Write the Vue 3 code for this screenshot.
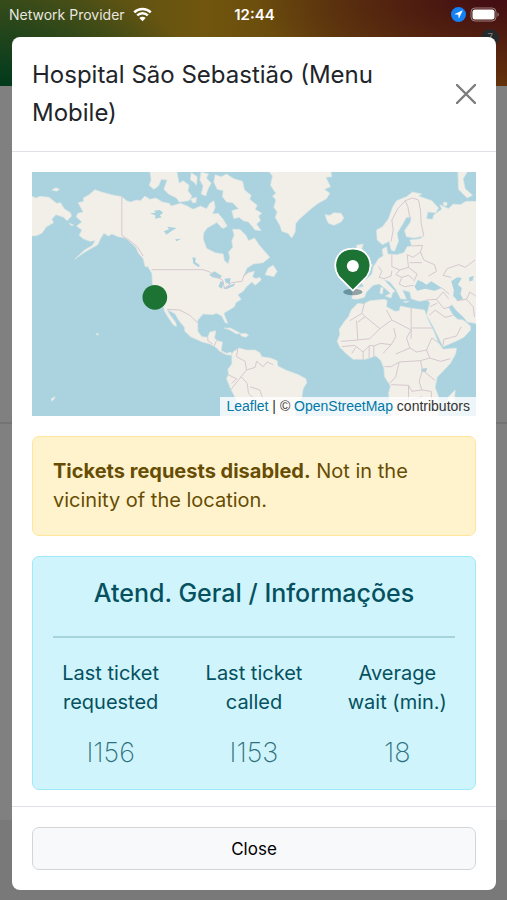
<template>
  <div class="screen">
    <div class="page-behind" aria-hidden="true">
      <div class="hero"></div>
      <div class="page-section"></div>
      <div class="page-footer"></div>
      <span class="badge">7</span>
    </div>

    <header class="status-bar">
      <div class="carrier">
        <span>Network Provider</span>
        <svg class="wifi" viewBox="0 0 20 15" aria-hidden="true">
          <path d="M1.3 5.2a12.5 12.5 0 0 1 17.4 0" />
          <path d="M4.4 8.5a8 8 0 0 1 11.2 0" />
          <path class="wifi-dot" d="M10 14.6 6.7 11.2a4.7 4.7 0 0 1 6.6 0z" />
        </svg>
      </div>
      <time class="clock">12:44</time>
      <div class="indicators">
        <svg class="location" viewBox="0 0 15 15" aria-hidden="true">
          <circle cx="7.5" cy="7.5" r="7.5" fill="#1481f5" />
          <path d="M11.8 3.2 3.2 7.2l4.1.6.5 4z" fill="#fff" />
        </svg>
        <svg class="battery" viewBox="0 0 30 15" aria-hidden="true">
          <rect x="1" y="1" width="25" height="13" rx="4" fill="none" stroke="#fff" stroke-opacity=".45" />
          <rect x="2.5" y="2.5" width="22" height="10" rx="2.5" fill="#fff" />
          <path d="M27.5 5.2q2.5 2.3 0 4.6z" fill="#fff" fill-opacity=".5" />
        </svg>
      </div>
    </header>

    <section class="modal" role="dialog" aria-modal="true" aria-labelledby="modal-title">
      <div class="modal-header">
        <h1 id="modal-title">{{ location }}</h1>
        <button class="btn-close" type="button" aria-label="Close dialog">
          <svg viewBox="0 0 20 20" aria-hidden="true"><path d="M1 1l18 18M19 1 1 19" /></svg>
        </button>
      </div>

      <div class="modal-body">
        <div class="map">
          <svg viewBox="5 6 1335 732" preserveAspectRatio="xMidYMid slice" aria-hidden="true">
            <g class="land">
              <path v-for="(d, i) in land" :key="i" :d="d" />
            </g>
            <g class="water">
              <path v-for="(d, i) in lakes" :key="i" :d="d" />
            </g>
            <g class="borders">
              <path v-for="(d, i) in borders" :key="i" :d="d" />
            </g>
            <circle cx="375" cy="382" r="37" fill="#1d7334" />
            <ellipse cx="969" cy="366" rx="29" ry="10" fill="#1b4550" fill-opacity=".45" />
            <path
              d="M969 362 927 320C905 286 918 236 969 236s64 50 42 84z"
              fill="#1d7334"
              stroke="#fff"
              stroke-width="5"
              stroke-linejoin="round"
            />
            <circle cx="969" cy="288" r="18" fill="#fff" />
          </svg>
          <div class="attribution">
            <a href="#leaflet">Leaflet</a> | © <a href="#openstreetmap">OpenStreetMap</a> contributors
          </div>
        </div>

        <div class="alert alert-warning" role="alert">
          <strong>Tickets requests disabled.</strong> Not in the vicinity of the location.
        </div>

        <div class="alert alert-info">
          <h2>Atend. Geral / Informações</h2>
          <hr />
          <dl class="stats">
            <div v-for="stat in stats" :key="stat.label" class="stat">
              <dt>{{ stat.label }}</dt>
              <dd>{{ stat.value }}</dd>
            </div>
          </dl>
        </div>
      </div>

      <div class="modal-footer">
        <button class="btn-light" type="button">Close</button>
      </div>
    </section>
  </div>
</template>

<script setup>
const location = "Hospital São Sebastião (Menu Mobile)";

const stats = [
  { label: "Last ticket requested", value: "I156" },
  { label: "Last ticket called", value: "I153" },
  { label: "Average wait (min.)", value: "18" },
];

const land = [
  // Eastern Siberia
  "M0 76 18 84 30 79 58 82 80 100 92 98 103 116 122 128 125 138 112 152 100 141 78 134 66 148 71 158 50 170 36 190 20 197 0 198Z",
  "M66 60 78 53 89 58 80 64Z",
  "M118 160 132 165 124 167Z",
  // North and Central America
  "M145 98 162 94 160 84 178 74 195 59 215 66 245 74 276 80 290 92 302 96 320 90 332 92 345 78 360 88 378 84 398 96 418 100 424 108 452 100 472 108 490 118 512 108 530 116 540 100 552 92 556 112 548 132 565 130 580 148 592 168 580 176 566 154 548 165 532 174 522 188 520 206 530 235 556 248 580 252 584 272 595 281 600 262 596 246 609 232 606 212 613 196 608 178 630 178 648 196 656 212 674 204 688 225 708 248 720 262 700 278 670 282 652 294 640 320 656 308 674 304 668 320 678 326 690 322 694 330 676 346 666 336 650 350 640 364 624 374 634 388 618 398 614 410 598 420 582 430 588 446 594 460 586 458 576 438 560 430 548 434 520 432 504 450 504 484 516 500 534 502 540 486 558 482 554 504 562 512 578 516 574 542 590 550 604 546 605 556 590 554 572 546 558 532 540 522 515 515 482 500 465 484 464 472 446 450 436 432 412 418 420 434 438 458 440 470 430 464 415 442 404 424 400 402 382 388 372 362 368 345 366 310 354 290 346 290 340 266 326 250 318 232 300 215 286 204 265 200 246 192 236 198 222 190 212 206 204 224 180 238 160 250 134 268 164 240 188 226 196 212 180 214 160 206 148 196 156 180 140 168 156 156 139 140 144 130 160 126Z",
  // Arctic archipelago
  "M360 0 364 30 358 46 372 58 386 48 394 28 412 30 402 58 416 72 440 84 448 96 478 92 486 78 474 62 478 46 460 32 448 40 440 0Z",
  "M484 8 502 20 500 46 492 36 482 30Z",
  "M514 6 536 12 530 24 544 40 534 58 528 78 514 72 520 48 510 30Z",
  "M482 86 500 82 498 98 488 98Z",
  "M556 14 574 20 590 12 612 26 638 34 644 60 664 76 660 88 682 106 676 118 696 130 686 138 692 152 680 162 694 182 676 180 656 156 640 152 628 142 612 146 606 122 626 116 608 98 590 96 578 80 580 62 562 58 552 36Z",
  "M560 156 572 150 586 164 576 174Z",
  "M715 294 730 286 742 304 732 320 706 314Z",
  // Greenland and Iceland
  "M714 0 728 18 722 46 738 70 728 78 738 90 732 112 742 126 736 142 750 166 756 184 774 190 786 204 796 186 798 160 810 146 826 132 842 118 862 102 890 86 900 70 884 58 902 50 894 34 888 22 906 20 902 0Z",
  "M886 134 900 136 912 128 934 130 942 144 934 156 912 166 896 160 890 148Z",
  // Caribbean
  "M583 474 602 474 632 490 620 492 600 480Z",
  "M632 491 648 490 656 496 648 502 634 498Z",
  // South America
  "M606 552 612 544 628 534 650 540 676 540 690 548 696 560 722 564 742 572 744 588 768 600 806 614 828 626 831 638 820 656 816 684 800 700 796 744 664 744 658 730 634 716 618 686 604 660 590 626 596 612 594 598 606 582Z",
  // Europe, western Asia and Arabia
  "M990 330 1010 328 1026 312 1030 292 1046 266 1060 258 1057 238 1070 230 1074 252 1100 254 1122 248 1132 230 1146 228 1140 210 1170 206 1182 198 1152 204 1130 200 1124 182 1142 156 1144 142 1130 142 1120 160 1102 190 1106 214 1094 244 1084 240 1078 214 1058 224 1042 210 1040 180 1058 170 1076 146 1088 112 1100 92 1130 80 1148 66 1176 72 1166 78 1206 92 1226 114 1218 128 1194 126 1190 146 1208 148 1212 134 1236 118 1230 104 1256 116 1270 102 1292 104 1308 94 1345 94 1345 462 1312 456 1300 440 1282 424 1266 404 1256 412 1270 436 1284 448 1300 450 1322 468 1322 480 1302 502 1282 512 1240 530 1224 498 1208 466 1190 436 1200 398 1190 390 1168 394 1144 386 1140 366 1118 360 1130 388 1112 386 1098 358 1080 336 1062 328 1078 346 1096 364 1088 368 1084 384 1066 378 1082 370 1064 354 1048 342 1030 346 1010 366 1004 382 980 388 966 386 970 354 1002 350Z",
  "M980 226 1000 222 996 236 1010 252 1012 266 1028 286 1018 300 986 304Z",
  "M1284 0 1316 0 1300 26 1306 56 1328 76 1312 84 1286 58Z",
  "M1242 96 1252 98 1250 108 1240 106Z",
  "M1053 352 1060 354 1058 372 1050 370Z",
  // Africa and Madagascar
  "M984 400 1000 402 1020 392 1064 388 1072 392 1070 410 1096 424 1108 422 1112 408 1140 414 1184 420 1194 448 1212 484 1226 518 1240 538 1280 534 1278 550 1262 580 1222 622 1216 652 1226 680 1224 744 1086 744 1076 670 1082 648 1064 620 1062 594 1052 570 1038 558 1006 568 970 568 950 552 930 532 922 514 930 494 928 478 944 454 956 440 964 420Z",
  "M1276 660 1274 688 1262 706 1250 700 1256 680Z",
  "M1120 394 1138 394 1128 398Z",
  // Pacific islands
  "M198 490 207 492 202 496Z",
  "M64 686 76 680 72 688 66 694Z",
];

const lakes = [
  "M360 130 378 128 372 122 390 120 400 128 390 136 396 142 376 146 376 136Z",
  "M402 184 418 178 412 170 440 174 424 184 410 194Z",
  "M436 208 454 206 440 214Z",
  "M488 262 498 264 496 276 510 286 506 292 490 280Z",
  "M538 314 554 304 576 318 570 326 548 322Z",
  "M572 334 582 336 576 356 566 350Z",
  "M584 326 602 324 600 342 588 338Z",
  "M580 354 616 340 612 348 588 358Z",
  // Black Sea, Caspian Sea and Aral
  "M1164 330 1178 336 1190 344 1204 334 1214 340 1236 354 1214 362 1186 356 1162 362 1154 350Z",
  "M1264 334 1282 322 1296 324 1284 344 1296 354 1292 372 1300 388 1284 392 1270 378 1272 360Z",
  "M1318 322 1332 318 1328 332 1318 334Z",
  "M1174 596 1192 594 1188 606 1176 606Z",
];

const borders = [
  "M276 80V196L300 212 322 230 340 258",
  "M366 299H520L540 306 556 318 578 330 584 356 606 338 636 334 644 314 662 300",
  "M412 418 450 420 480 436 492 448 506 460",
  "M534 502V512L548 522M560 512 552 530M578 546 574 552",
  "M624 536 620 560 646 574 650 600 634 620 652 640 656 670 676 690",
  "M594 614 620 626 606 640M650 600 676 592 680 574 700 590 712 576 730 584M634 620 602 660M660 650 690 660 700 690",
  "M1084 214 1090 180 1086 150 1104 116 1126 92 1148 84M1126 92 1134 110 1140 142M1148 84 1166 90 1172 120 1174 160 1182 198",
  "M1086 254V290L1110 300 1136 292 1132 254M1046 290 1056 304 1048 322 1062 326 1084 318 1086 302",
  "M1132 254 1150 262 1172 246 1178 226 1146 228M1172 246 1182 270 1214 284 1220 304 1196 318M1136 292 1162 312 1152 334M1140 278H1176",
  "M1110 300 1098 314 1116 322 1108 342 1124 350 1152 346M1116 322 1136 316 1150 328",
  "M1264 322 1240 316 1252 296 1286 284 1306 292 1336 270",
  "M1236 354 1258 372M1190 390 1220 388 1240 366 1256 386M1220 388 1242 416 1262 410M1200 410 1222 400M1198 436 1216 420 1246 442 1268 436M1240 526 1242 508 1280 498 1294 470",
  "M1280 392 1310 388 1330 410 1334 440M1310 388 1320 366 1340 380",
  "M1004 398 996 430 960 452M996 430 1006 440 1050 476 1086 450 1070 420",
  "M1144 414V480M1144 474H1208M1086 450 1144 480V506",
  "M1092 474 1098 500 1084 524 1060 550M1032 528 1052 520 1084 524M1144 480 1130 504 1140 534 1098 552",
  "M980 452 984 510 934 514M1006 440 984 456M984 510 1020 506 1050 476M936 530 974 526 1000 546 1020 526 1032 528V562M966 550 978 532M1000 546V568M1018 528V564",
  "M1140 534 1160 546 1190 540 1206 504 1226 518M1190 540 1200 564 1232 574 1262 566M1200 564 1172 572 1108 576 1084 590 1064 590",
  "M1108 576 1098 620 1080 640M1172 572 1178 600 1168 634 1176 660 1146 664 1136 646 1084 644M1178 600 1216 632M1136 646V690L1090 690M1176 660 1204 664 1206 700M1146 690 1176 680",
];
</script>

<style>
body {
  margin: 0;
  background: #808080;
}
</style>

<style scoped>
* {
  box-sizing: border-box;
}

.screen {
  position: relative;
  min-height: 100vh;
  padding-bottom: 11px;
  overflow: hidden;
  font-family: Inter, "Liberation Sans", sans-serif;
  color: #212529;
}

.page-behind {
  position: absolute;
  inset: 0;
  display: flex;
  flex-direction: column;
  background: #808080;
}

.hero {
  height: 86px;
  background:
    radial-gradient(ellipse 200px 110px at 0 100%, #003a1c 0, #003a1c00 100%),
    radial-gradient(ellipse 240px 90px at 98% 0, #430d13 0, #430d1300 100%),
    linear-gradient(90deg, #46501a 0, #70560e 40%, #66430c 65%, #64330a 100%);
}

.page-section {
  height: 338px;
  border-bottom: 2px solid #747474;
}

.page-footer {
  flex: 1;
  background: linear-gradient(#808080 396px, #797979 396px);
}

.badge {
  position: absolute;
  top: 29px;
  right: 8px;
  width: 18px;
  height: 18px;
  border-radius: 50%;
  background: #26292c;
  color: #808080;
  font-size: 10px;
  line-height: 16px;
  text-align: center;
}

.status-bar {
  position: relative;
  display: grid;
  grid-template-columns: 1fr auto 1fr;
  align-items: center;
  height: 28px;
  padding: 0 7px 0 9px;
  color: #fff;
  font-size: 14px;
}

.carrier {
  display: flex;
  align-items: center;
  gap: 8px;
  color: #e8e6df;
}

.wifi {
  width: 19px;
  height: 15px;
  fill: none;
  stroke: #fff;
  stroke-width: 2.6;
}

.wifi-dot {
  fill: #fff;
  stroke: none;
}

.clock {
  font-size: 15px;
  font-weight: 600;
}

.indicators {
  display: flex;
  align-items: center;
  justify-content: flex-end;
  gap: 4px;
}

.location {
  width: 15px;
  height: 15px;
}

.battery {
  width: 30px;
  height: 15px;
}

.modal {
  position: relative;
  margin: 9px 11px 0 12px;
  border-radius: 8px;
  background: #fff;
}

.modal-header {
  display: flex;
  align-items: center;
  justify-content: space-between;
  gap: 20px;
  padding: 19px 20px;
  border-bottom: 1px solid #dee2e6;
}

h1 {
  margin: 0;
  font-size: 24px;
  font-weight: 400;
  line-height: 38px;
}

.btn-close {
  display: flex;
  flex: none;
  padding: 0;
  border: 0;
  background: none;
  cursor: pointer;
}

.btn-close svg {
  width: 20px;
  height: 20px;
  fill: none;
  stroke: #7c7c7c;
  stroke-width: 2.4;
  stroke-linecap: round;
}

.modal-body {
  display: flex;
  flex-direction: column;
  gap: 20px;
  padding: 20px 20px 16px;
}

.map {
  position: relative;
  aspect-ratio: 444 / 244;
  overflow: hidden;
  background: #aad3df;
}

.map svg {
  display: block;
  width: 100%;
  height: 100%;
}

.land {
  fill: #f2efe9;
  stroke: #dce5e4;
  stroke-width: 2;
  stroke-linejoin: round;
}

.water {
  fill: #aad3df;
}

.borders {
  fill: none;
  stroke: #d6c8cf;
  stroke-width: 3;
  stroke-linejoin: round;
}

.attribution {
  position: absolute;
  right: 0;
  bottom: 0;
  padding: 0 6px;
  background: rgba(255, 255, 255, 0.8);
  color: #333;
  font-family: "Liberation Sans", sans-serif;
  font-size: 14px;
  line-height: 19px;
  white-space: nowrap;
}

.attribution a {
  color: #0078a8;
  text-decoration: none;
}

.alert {
  padding: 20px;
  border: 1px solid;
  border-radius: 7px;
  font-size: 20px;
  line-height: 29px;
}

.alert-warning {
  border-color: #ffe69c;
  background: #fff3cd;
  color: #664d03;
}

.alert-info {
  border-color: #9eeaf9;
  background: #cff4fc;
  color: #055160;
  text-align: center;
}

h2 {
  margin: 0;
  font-size: 25px;
  font-weight: 500;
  line-height: 32px;
}

hr {
  margin: 27px 0 21px;
  border: 0;
  border-top: 2px solid #055160;
  opacity: 0.2;
}

.stats {
  display: flex;
  margin: 0 -14px;
}

.stat {
  flex: 1;
  padding: 0 14px;
}

dt {
  font-size: 20px;
}

dd {
  margin: 20px 0 0;
  font-size: 27px;
  font-weight: 200;
  line-height: 32px;
  opacity: 0.8;
}

.modal-footer {
  padding: 20px;
  border-top: 1px solid #dee2e6;
}

.btn-light {
  width: 100%;
  height: 43px;
  border: 1px solid #d3d6d9;
  border-radius: 7px;
  background: #f8f9fa;
  color: #000;
  font-family: inherit;
  font-size: 17px;
  cursor: pointer;
}
</style>
